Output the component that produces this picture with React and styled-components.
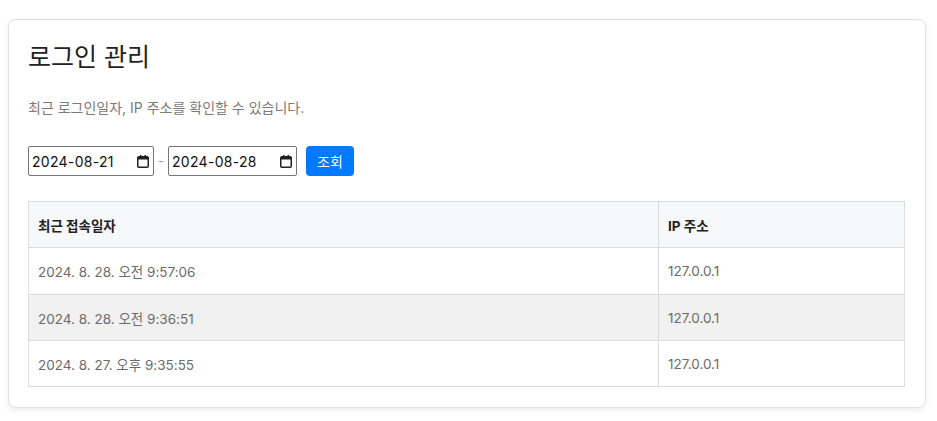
import React, { useState } from 'react';
import styled, { createGlobalStyle } from 'styled-components';

const GlobalStyle = createGlobalStyle`
  body {
    margin: 0;
    background: #fff;
    font-family: Inter, "Noto Sans", "Noto Sans CJK KR", sans-serif;
  }
`;

const Page = styled.div`
  padding: 19px 11px 14px 8px;
`;

const Card = styled.div`
  background: #fff;
  border: 1px solid #e2e2e2;
  border-radius: 8px;
  box-shadow: 0 2px 6px rgba(0, 0, 0, 0.08);
  padding: 20px 20px 20px 19px;
`;

const Title = styled.h1`
  margin: 0;
  font-size: 25px;
  font-weight: 400;
  line-height: 34px;
  color: #222;
`;

const Description = styled.p`
  margin: 24px 0 0;
  font-size: 14px;
  line-height: 20px;
  color: #7d7a78;
`;

const SearchBar = styled.div`
  display: flex;
  align-items: center;
  margin-top: 28px;
`;

const DateField = styled.label`
  box-sizing: border-box;
  display: flex;
  align-items: center;
  height: 30px;
  width: ${(p) => p.$width}px;
  padding: 0 4px 0 3px;
  border: 1px solid #767676;
  border-radius: 2px;
  background: #fff;
`;

const DateText = styled.input`
  flex: 1;
  min-width: 0;
  border: none;
  outline: none;
  padding: 0;
  font-family: Inter, "Noto Sans", sans-serif;
  font-size: 14px;
  letter-spacing: 0.3px;
  color: #111;
  background: transparent;
`;

const Dash = styled.span`
  margin: 0 4px;
  font-size: 13px;
  color: #999;
`;

const SearchButton = styled.button`
  margin-left: 9px;
  height: 30px;
  width: 48px;
  border: none;
  border-radius: 4px;
  background: #007bff;
  color: #fff;
  font-family: "Noto Sans CJK KR", sans-serif;
  font-size: 14px;
  cursor: pointer;
`;

const Table = styled.table`
  margin-top: 25px;
  width: 100%;
  border-collapse: collapse;
  font-size: 13.5px;
`;

const Th = styled.th`
  height: 45px;
  padding: 0 9px;
  text-align: left;
  font-weight: 700;
  color: #222;
  background: #f7f8fa;
  border: 1px solid #dcdcdc;
  width: ${(p) => p.$width || 'auto'};
`;

const Row = styled.tr`
  background: ${(p) => (p.$striped ? '#f1f1f1' : '#fff')};
`;

const Td = styled.td`
  height: ${(p) => (p.$tall ? 46 : 45)}px;
  padding: 0 9px;
  color: #6b6b6b;
  border: 1px solid #dcdcdc;
`;

const CalendarIcon = () => (
  <svg width="12" height="13" viewBox="0 0 12 13">
    <rect x="0.75" y="1.75" width="10.5" height="10.5" rx="1" fill="none" stroke="#222" strokeWidth="1.5" />
    <rect x="1" y="2" width="10" height="2.5" fill="#222" />
    <rect x="3" y="0" width="1.5" height="2.5" fill="#222" />
    <rect x="7.5" y="0" width="1.5" height="2.5" fill="#222" />
  </svg>
);

const DatePicker = ({ width, value, onChange }) => (
  <DateField $width={width}>
    <DateText type="text" value={value} onChange={(e) => onChange(e.target.value)} />
    <CalendarIcon />
  </DateField>
);

const logs = [
  { date: '2024. 8. 28. 오전 9:57:06', ip: '127.0.0.1' },
  { date: '2024. 8. 28. 오전 9:36:51', ip: '127.0.0.1' },
  { date: '2024. 8. 27. 오후 9:35:55', ip: '127.0.0.1' },
];

const App = () => {
  const [from, setFrom] = useState('2024-08-21');
  const [to, setTo] = useState('2024-08-28');

  return (
    <Page>
      <GlobalStyle />
      <Card>
        <Title>로그인 관리</Title>
        <Description>최근 로그인일자, IP 주소를 확인할 수 있습니다.</Description>
        <SearchBar>
          <DatePicker width={126} value={from} onChange={setFrom} />
          <Dash>-</Dash>
          <DatePicker width={129} value={to} onChange={setTo} />
          <SearchButton>조회</SearchButton>
        </SearchBar>
        <Table>
          <thead>
            <tr>
              <Th $width="611px">최근 접속일자</Th>
              <Th>IP 주소</Th>
            </tr>
          </thead>
          <tbody>
            {logs.map((log, i) => (
              <Row key={i} $striped={i % 2 === 1}>
                <Td $tall={i === 0}>{log.date}</Td>
                <Td $tall={i === 0}>{log.ip}</Td>
              </Row>
            ))}
          </tbody>
        </Table>
      </Card>
    </Page>
  );
};

export default App;
